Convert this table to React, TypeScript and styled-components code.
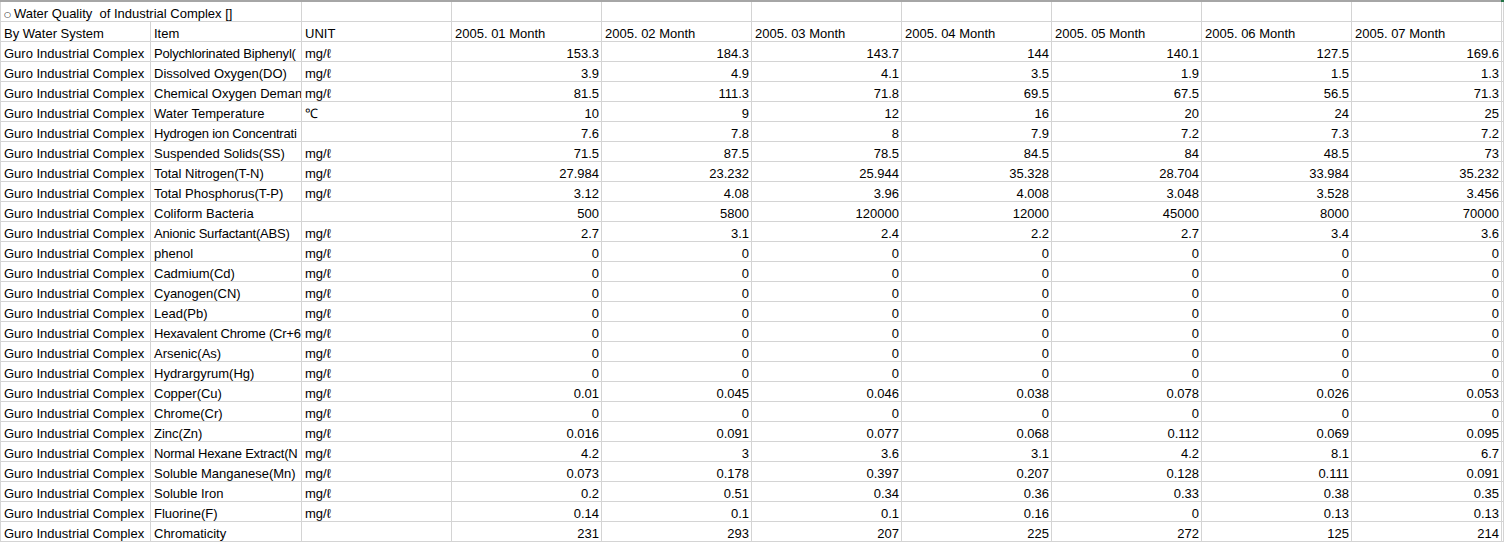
import React from "react";
import styled, { createGlobalStyle } from "styled-components";

const Global = createGlobalStyle`
  html, body { margin: 0; padding: 0; background: #ffffff; }
  body { font-family: "Liberation Sans", Arial, sans-serif; font-size: 13px; color: #000; }
`;

const GRID = "#d4d4d4";
const COLS = "151px 151px repeat(8, 150px) 2px";

const Sheet = styled.div`
  width: 1504px;
  height: 544px;
  overflow: hidden;
  display: flex;
  flex-direction: column;
`;

const TopBar = styled.div`
  display: flex;
  height: 2px;
  flex: none;
`;

const TopGray = styled.div`
  width: 1501px;
  background: #a6a6a6;
`;

const TopGreen = styled.div`
  flex: 1;
  background: #217346;
`;

const Row = styled.div`
  display: grid;
  grid-template-columns: ${COLS};
  height: 20px;
  flex: none;
`;

const TitleRow = styled.div`
  display: grid;
  grid-template-columns: 302px repeat(8, 150px) 2px;
  height: 20px;
  flex: none;
`;

const Cell = styled.div<{ $num?: boolean; $first?: boolean; $tight?: boolean }>`
  box-sizing: border-box;
  height: 20px;
  border-bottom: 1px solid ${GRID};
  border-right: 1px solid ${GRID};
  border-left: ${(p) => (p.$first ? `1px solid ${GRID}` : "none")};
  padding: 4px ${(p) => (p.$num ? "2px" : "0")} 0 ${(p) => (p.$num ? "2px" : "3px")};
  line-height: 15px;
  letter-spacing: ${(p) => (p.$tight ? "-0.2px" : "normal")};
  white-space: pre;
  overflow: hidden;
  text-align: ${(p) => (p.$num ? "right" : "left")};
`;

const Spill = styled.div`
  box-sizing: border-box;
  height: 20px;
  border-bottom: 1px solid ${GRID};
  border-right: 1px solid ${GRID};
`;

const Bullet = styled.span`
  font-family: "DejaVu Sans", sans-serif;
  font-size: 8px;
  margin-right: 3px;
  vertical-align: 1px;
`;

const months = ["01", "02", "03", "04", "05", "06", "07"];

const Z = ["0", "0", "0", "0", "0", "0", "0"];
const MG = "mg/ℓ";

const data: [string, string, string[]][] = [
  ["Polychlorinated Biphenyl(", MG, ["153.3", "184.3", "143.7", "144", "140.1", "127.5", "169.6"]],
  ["Dissolved Oxygen(DO)", MG, ["3.9", "4.9", "4.1", "3.5", "1.9", "1.5", "1.3"]],
  ["Chemical Oxygen Deman", MG, ["81.5", "111.3", "71.8", "69.5", "67.5", "56.5", "71.3"]],
  ["Water Temperature", "℃", ["10", "9", "12", "16", "20", "24", "25"]],
  ["Hydrogen ion Concentrati", "", ["7.6", "7.8", "8", "7.9", "7.2", "7.3", "7.2"]],
  ["Suspended Solids(SS)", MG, ["71.5", "87.5", "78.5", "84.5", "84", "48.5", "73"]],
  ["Total Nitrogen(T-N)", MG, ["27.984", "23.232", "25.944", "35.328", "28.704", "33.984", "35.232"]],
  ["Total Phosphorus(T-P)", MG, ["3.12", "4.08", "3.96", "4.008", "3.048", "3.528", "3.456"]],
  ["Coliform Bacteria", "", ["500", "5800", "120000", "12000", "45000", "8000", "70000"]],
  ["Anionic Surfactant(ABS)", MG, ["2.7", "3.1", "2.4", "2.2", "2.7", "3.4", "3.6"]],
  ["phenol", MG, Z],
  ["Cadmium(Cd)", MG, Z],
  ["Cyanogen(CN)", MG, Z],
  ["Lead(Pb)", MG, Z],
  ["Hexavalent Chrome (Cr+6", MG, Z],
  ["Arsenic(As)", MG, Z],
  ["Hydrargyrum(Hg)", MG, Z],
  ["Copper(Cu)", MG, ["0.01", "0.045", "0.046", "0.038", "0.078", "0.026", "0.053"]],
  ["Chrome(Cr)", MG, Z],
  ["Zinc(Zn)", MG, ["0.016", "0.091", "0.077", "0.068", "0.112", "0.069", "0.095"]],
  ["Normal Hexane Extract(N", MG, ["4.2", "3", "3.6", "3.1", "4.2", "8.1", "6.7"]],
  ["Soluble Manganese(Mn)", MG, ["0.073", "0.178", "0.397", "0.207", "0.128", "0.111", "0.091"]],
  ["Soluble Iron", MG, ["0.2", "0.51", "0.34", "0.36", "0.33", "0.38", "0.35"]],
  ["Fluorine(F)", MG, ["0.14", "0.1", "0.1", "0.16", "0", "0.13", "0.13"]],
  ["Chromaticity", "", ["231", "293", "207", "225", "272", "125", "214"]],
];

export default function App() {
  return (
    <>
      <Global />
      <Sheet>
        <TopBar>
          <TopGray />
          <TopGreen />
        </TopBar>
        <TitleRow>
          <Cell $first>
            <Bullet>○</Bullet>
            {"Water Quality  of Industrial Complex []"}
          </Cell>
          {Array.from({ length: 9 }).map((_, i) => (
            <Spill key={i} />
          ))}
        </TitleRow>
        <Row>
          <Cell $first>By Water System</Cell>
          <Cell>Item</Cell>
          <Cell>UNIT</Cell>
          {months.map((m) => (
            <Cell key={m}>{`2005. ${m} Month`}</Cell>
          ))}
          <Spill />
        </Row>
        {data.map(([item, unit, vals], r) => (
          <Row key={r}>
            <Cell $first>Guro Industrial Complex</Cell>
            <Cell $tight={item.length > 22}>{item}</Cell>
            <Cell>{unit}</Cell>
            {vals.map((v, i) => (
              <Cell key={i} $num>
                {v}
              </Cell>
            ))}
            <Spill />
          </Row>
        ))}
      </Sheet>
    </>
  );
}
